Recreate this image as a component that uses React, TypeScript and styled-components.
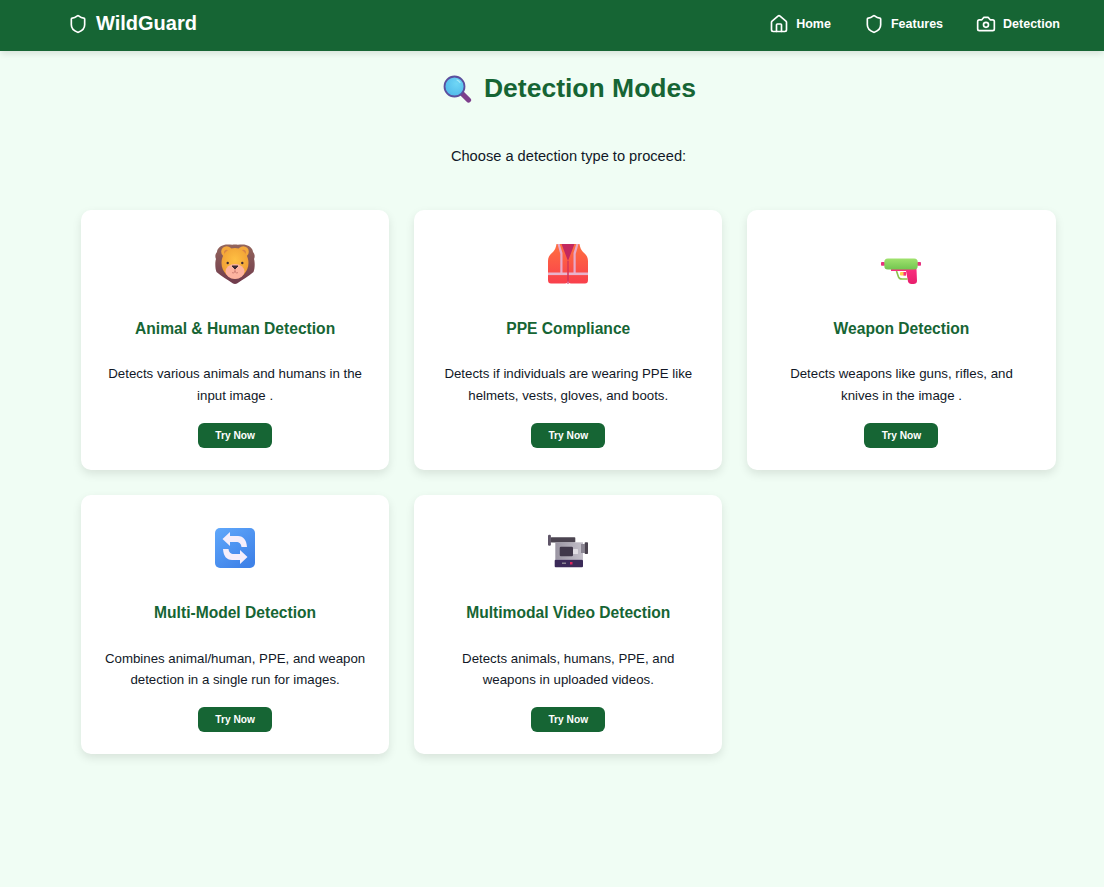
import React from "react";
import styled, { createGlobalStyle } from "styled-components";

const GlobalStyle = createGlobalStyle`
  html, body {
    margin: 0;
    padding: 0;
    background: #f0fdf4;
    font-family: "Liberation Sans", Arial, sans-serif;
    color: #111827;
  }
`;

const Page = styled.div`
  min-height: 887px;
  display: flex;
  flex-direction: column;
`;
const Header = styled.header`
  height: 51px;
  box-sizing: border-box;
  display: flex;
  align-items: center;
  justify-content: space-between;
  padding: 0 44px 4px 68px;
  background: #166534;
  color: #fff;
  box-shadow: 0 4px 6px -1px rgba(0, 0, 0, 0.1);
`;
const Brand = styled.div`
  display: flex;
  align-items: center;
  gap: 8px;
  font-size: 20px;
  font-weight: 700;
`;
const Nav = styled.nav`
  display: flex;
  align-items: center;
  gap: 33px;
`;
const NavLink = styled.a`
  display: flex;
  align-items: center;
  gap: 7px;
  font-size: 12.5px;
  font-weight: 700;
  color: #fff;
`;
const Main = styled.main`
  padding: 0 48px 0 81px;
`;
const Title = styled.h1`
  margin: 20px 0 0;
  padding-left: 2px;
  height: 34px;
  display: flex;
  align-items: center;
  justify-content: center;
  gap: 11px;
  font-size: 26.5px;
  line-height: 34px;
  font-weight: 700;
  color: #166534;
`;
const Subtitle = styled.p`
  margin: 41px 0 0;
  font-size: 14.65px;
  line-height: 20px;
  text-align: center;
`;
const Grid = styled.div`
  margin-top: 44px;
  display: grid;
  grid-template-columns: repeat(3, 308.2px);
  gap: 25px;
`;
const Card = styled.section`
  height: 259.5px;
  box-sizing: border-box;
  padding: 33.6px 16px 0;
  display: flex;
  flex-direction: column;
  align-items: center;
  background: #fff;
  border-radius: 10px;
  box-shadow: 0 4px 10px rgba(0, 0, 0, 0.1);
`;
const IconSlot = styled.div`
  width: 40px;
  height: 40px;
`;
const CardTitle = styled.h2`
  margin: 35px 0 0;
  font-size: 15.6px;
  line-height: 20px;
  font-weight: 700;
  color: #166534;
  text-align: center;
`;
const CardText = styled.p`
  margin: 24.6px 0 0;
  font-size: 13.28px;
  line-height: 21.6px;
  text-align: center;
`;
const TryButton = styled.button`
  margin-top: 16.4px;
  width: 74px;
  height: 25px;
  padding: 0;
  border: none;
  border-radius: 6px;
  background: #166534;
  color: #fff;
  font-family: inherit;
  font-size: 10.2px;
  font-weight: 700;
`;

const LineIcon = ({ children, size = 20 }: { children: React.ReactNode; size?: number }) => (
  <svg
    width={size}
    height={size}
    viewBox="0 0 24 24"
    fill="none"
    stroke="currentColor"
    strokeWidth="2"
    strokeLinecap="round"
    strokeLinejoin="round"
  >
    {children}
  </svg>
);

const shieldPath =
  "M20 13c0 5-3.5 7.5-7.66 8.95a1 1 0 0 1-.67-.01C7.5 20.5 4 18 4 13V6a1 1 0 0 1 1-1c2 0 4.5-1.2 6.24-2.72a1.17 1.17 0 0 1 1.52 0C14.51 3.81 17 5 19 5a1 1 0 0 1 1 1z";

const ShieldIcon = () => (
  <LineIcon>
    <path d={shieldPath} />
  </LineIcon>
);
const HomeIcon = () => (
  <LineIcon>
    <path d="M15 21v-8a1 1 0 0 0-1-1h-4a1 1 0 0 0-1 1v8" />
    <path d="M3 10a2 2 0 0 1 .709-1.528l7-5.999a2 2 0 0 1 2.582 0l7 5.999A2 2 0 0 1 21 10v9a2 2 0 0 1-2 2H5a2 2 0 0 1-2-2z" />
  </LineIcon>
);
const CameraIcon = () => (
  <LineIcon>
    <path d="M14.5 4h-5L7 7H4a2 2 0 0 0-2 2v9a2 2 0 0 0 2 2h16a2 2 0 0 0 2-2V9a2 2 0 0 0-2-2h-3l-2.5-3z" />
    <circle cx="12" cy="13" r="3" />
  </LineIcon>
);

const MagnifierIcon = () => (
  <svg width="30" height="30" viewBox="0 0 30 30">
    <defs>
      <radialGradient id="lens" cx="0.6" cy="0.35" r="0.7">
        <stop offset="0" stopColor="#6fd6f5" />
        <stop offset="1" stopColor="#4fb8ea" />
      </radialGradient>
    </defs>
    <path d="M19 20.5 L25.5 27" stroke="#7d3f8c" strokeWidth="5.2" strokeLinecap="round" />
    <circle cx="11.5" cy="13.5" r="10" fill="url(#lens)" stroke="#5b4f9e" strokeWidth="1.8" />
    <path d="M14 7a6.5 6.5 0 0 1 3 2.5" stroke="#a8ebfa" strokeWidth="1.2" fill="none" strokeLinecap="round" />
  </svg>
);

const LionIcon = () => (
  <svg width="40" height="40" viewBox="0 0 40 40">
    <defs>
      <linearGradient id="mane" x1="0" y1="0" x2="0" y2="1">
        <stop offset="0" stopColor="#93655c" />
        <stop offset="1" stopColor="#6f3a4c" />
      </linearGradient>
      <radialGradient id="lionFace" cx="0.5" cy="0.4" r="0.65">
        <stop offset="0" stopColor="#ffc043" />
        <stop offset="1" stopColor="#ee9a32" />
      </radialGradient>
    </defs>
    <path
      d="M9 1 C12 0 16 1 20 0.5 C24 1 28 0 31 1 C35 2 38 5 38 8 C40 10 40 13 39 15 C40 18 40 24 38.5 28 C34 32 27 36 22 39.5 C21 40 19 40 18 39.5 C13 36 6 32 1.5 28 C0 24 0 18 1 15 C0 13 0 10 2 8 C2 5 5 2 9 1 Z"
      fill="url(#mane)"
    />
    <circle cx="11.7" cy="7.7" r="5.5" fill="#f4a93c" />
    <circle cx="28.3" cy="7.7" r="5.5" fill="#f4a93c" />
    <circle cx="11.7" cy="8.4" r="2.6" fill="#d98544" />
    <circle cx="28.3" cy="8.4" r="2.6" fill="#d98544" />
    <path d="M20 4 C28 4 33.5 11 33.5 19 C33.5 28 26 34.5 20 34.5 C14 34.5 6.5 28 6.5 19 C6.5 11 12 4 20 4 Z" fill="url(#lionFace)" />
    <ellipse cx="20" cy="27.5" rx="9.5" ry="7.5" fill="#fdb3a0" />
    <circle cx="12.7" cy="19" r="1.2" fill="#3d2a35" />
    <circle cx="27.3" cy="19" r="1.2" fill="#3d2a35" />
    <path d="M17 22 H23 L20 25 Z" fill="#3d2a35" strokeLinejoin="round" stroke="#3d2a35" />
    <path d="M20 25 V27 M17 28.5 C18.5 29.5 19.5 29 20 27 C20.5 29 21.5 29.5 23 28.5" stroke="#c97a70" strokeWidth="0.9" fill="none" />
  </svg>
);

const VestIcon = () => (
  <svg width="40" height="40" viewBox="0 0 40 40">
    <defs>
      <linearGradient id="vest" x1="0" y1="0" x2="0" y2="1">
        <stop offset="0" stopColor="#ff7040" />
        <stop offset="1" stopColor="#f93f4c" />
      </linearGradient>
    </defs>
    <path d="M9 0 H31 V20 L20 24 L9 20 Z" fill="#c2285f" />
    <path
      d="M8.5 0 H13.5 L20 17 V36 C20 38.5 19 39.5 17 39.5 H3 C1 39.5 0 38.5 0 36 V17 C0 12 3 10 5 8 C7 6 8 3 8.5 0 Z"
      fill="url(#vest)"
    />
    <path
      d="M31.5 0 H26.5 L20 17 V36 C20 38.5 21 39.5 23 39.5 H37 C39 39.5 40 38.5 40 36 V17 C40 12 37 10 35 8 C33 6 32 3 31.5 0 Z"
      fill="url(#vest)"
    />
    <path d="M9.5 0 H11.7 L14.5 9 V29 H12.3 V10 Z" fill="#e8a8c8" />
    <path d="M30.5 0 H28.3 L25.5 9 V29 H27.7 V10 Z" fill="#e8a8c8" />
    <rect x="0" y="28.5" width="19.5" height="2.6" fill="#e8b4cc" />
    <rect x="20.5" y="28.5" width="19.5" height="2.6" fill="#e8b4cc" />
    <rect x="19.5" y="17" width="1" height="23" fill="#c2285f" />
  </svg>
);

const WaterGunIcon = () => (
  <svg width="40" height="40" viewBox="0 0 40 40">
    <defs>
      <linearGradient id="gunBody" x1="0" y1="0" x2="0" y2="1">
        <stop offset="0" stopColor="#a0e26e" />
        <stop offset="1" stopColor="#72c650" />
      </linearGradient>
      <linearGradient id="gunGrip" x1="0" y1="0" x2="0" y2="1">
        <stop offset="0" stopColor="#f9307e" />
        <stop offset="1" stopColor="#e81e6c" />
      </linearGradient>
    </defs>
    <rect x="0" y="18" width="4" height="3.7" rx="0.8" fill="#e7337f" />
    <rect x="36" y="18" width="4" height="3.7" rx="0.8" fill="#e7337f" />
    <path d="M10 25 H35.5 L36 37 C36 39 34.5 40 32.5 40 H30.5 C28.5 40 27.5 39 27 37.5 L25 27 H10 Z" fill="url(#gunGrip)" />
    <path d="M15.5 27 L17.5 33 C18 34.5 19 35 21 35 H26.5" stroke="#8bc34a" strokeWidth="1.6" fill="none" />
    <rect x="19" y="28" width="6" height="3.6" rx="0.8" fill="#ffd24d" />
    <rect x="22.5" y="28" width="2.5" height="3.6" fill="#f9307e" />
    <rect x="3.3" y="14.5" width="33.4" height="11" rx="3.5" fill="url(#gunBody)" />
  </svg>
);

const arrowPath = "M7.5 11 L15 4 V8 H23 C28.5 8 31.5 12 32 19 H26.5 C26 15.5 24.5 14 21 14 H15 V18 Z";

const RefreshIcon = () => (
  <svg width="40" height="40" viewBox="0 0 40 40">
    <defs>
      <linearGradient id="blueBox" x1="0" y1="0" x2="0.7" y2="1">
        <stop offset="0" stopColor="#60a8fb" />
        <stop offset="1" stopColor="#3f82e8" />
      </linearGradient>
    </defs>
    <rect x="0" y="0" width="40" height="40" rx="5" fill="url(#blueBox)" />
    <path d={arrowPath} fill="#f5eefb" />
    <path d={arrowPath} fill="#f5eefb" transform="rotate(180 20 20)" />
  </svg>
);

const CamcorderIcon = () => (
  <svg width="40" height="40" viewBox="0 0 40 40">
    <defs>
      <linearGradient id="camBody" x1="0" y1="0" x2="1" y2="0">
        <stop offset="0" stopColor="#9a95a2" />
        <stop offset="1" stopColor="#c4c0ca" />
      </linearGradient>
    </defs>
    <rect x="0" y="6.7" width="2.9" height="11" rx="1.2" fill="#5f5568" />
    <rect x="2.7" y="9.3" width="24.6" height="5.2" rx="0.8" fill="#4b4450" />
    <rect x="7.3" y="14.3" width="27.7" height="17.5" fill="url(#camBody)" />
    <rect x="33" y="16" width="3.8" height="9" fill="#8a8592" />
    <rect x="36.7" y="14.3" width="3.3" height="11.7" rx="0.8" fill="#4b4450" />
    <rect x="11.7" y="18.7" width="13.3" height="9.6" rx="1.2" fill="#40384a" />
    <rect x="25" y="21" width="5" height="5" rx="0.6" fill="#e0dde3" />
    <rect x="6.7" y="31.7" width="28.3" height="7.6" rx="1" fill="#3b2a58" />
    <rect x="14" y="34.5" width="4" height="1.5" fill="#8a8592" />
    <rect x="22" y="34" width="2.5" height="2.5" fill="#e0245e" />
  </svg>
);

const modes = [
  {
    icon: <LionIcon />,
    title: "Animal & Human Detection",
    lines: ["Detects various animals and humans in the", "input image ."],
  },
  {
    icon: <VestIcon />,
    title: "PPE Compliance",
    lines: ["Detects if individuals are wearing PPE like", "helmets, vests, gloves, and boots."],
  },
  {
    icon: <WaterGunIcon />,
    title: "Weapon Detection",
    lines: ["Detects weapons like guns, rifles, and", "knives in the image ."],
  },
  {
    icon: <RefreshIcon />,
    title: "Multi-Model Detection",
    lines: ["Combines animal/human, PPE, and weapon", "detection in a single run for images."],
  },
  {
    icon: <CamcorderIcon />,
    title: "Multimodal Video Detection",
    lines: ["Detects animals, humans, PPE, and", "weapons in uploaded videos."],
  },
];

const App = () => (
  <Page>
    <GlobalStyle />
    <Header>
      <Brand>
        <ShieldIcon />
        WildGuard
      </Brand>
      <Nav>
        <NavLink>
          <HomeIcon />
          Home
        </NavLink>
        <NavLink>
          <ShieldIcon />
          Features
        </NavLink>
        <NavLink>
          <CameraIcon />
          Detection
        </NavLink>
      </Nav>
    </Header>
    <Main>
      <Title>
        <MagnifierIcon />
        Detection Modes
      </Title>
      <Subtitle>Choose a detection type to proceed:</Subtitle>
      <Grid>
        {modes.map(mode => (
          <Card key={mode.title}>
            <IconSlot>{mode.icon}</IconSlot>
            <CardTitle>{mode.title}</CardTitle>
            <CardText>
              {mode.lines[0]}
              <br />
              {mode.lines[1]}
            </CardText>
            <TryButton>Try Now</TryButton>
          </Card>
        ))}
      </Grid>
    </Main>
  </Page>
);

export default App;
